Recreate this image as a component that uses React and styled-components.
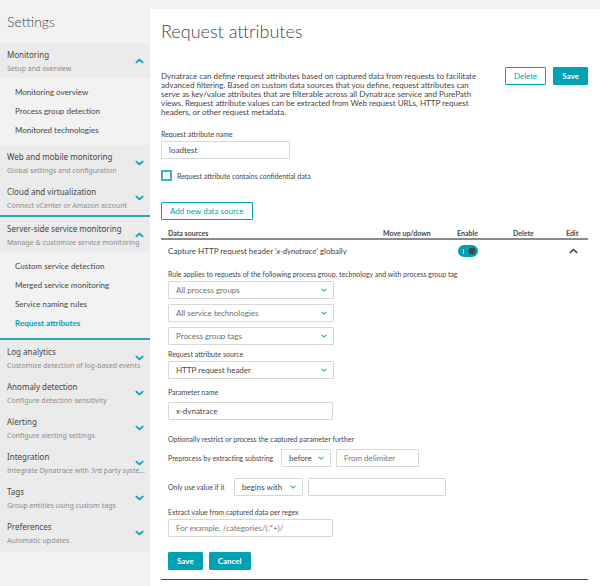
import React, { useState } from "react";
import styled, { createGlobalStyle } from "styled-components";

const GlobalStyle = createGlobalStyle`
  *, *::before, *::after {
    box-sizing: border-box;
  }

  body {
    margin: 0;
    background: #f2f2f2;
    color: #454646;
    font-family: "Lato", sans-serif;
    font-size: 8px;
    line-height: 10px;
  }

  button, input, select {
    margin: 0;
    font: inherit;
    color: inherit;
  }
`;

const Page = styled.div`
  display: flex;
  min-height: 100vh;
`;

const Sidebar = styled.nav`
  flex: 0 0 150px;
  min-width: 0;
  padding-top: 12px;
`;

const SidebarTitle = styled.h2`
  margin: 0 0 11px;
  padding-left: 7px;
  font-weight: 300;
  font-size: 14px;
  line-height: 20px;
`;

const Group = styled.section`
  border-style: solid;
  border-color: #27a9b8;
  border-width: ${(props) => (props.$active ? "2px 0" : "0")};

  &:last-child {
    padding-bottom: 2px;
    background: #ebebeb;
  }
`;

const GroupHeader = styled.button`
  display: grid;
  grid-template-columns: minmax(0, 1fr);
  width: 100%;
  height: 35px;
  padding: 0 6px 0 7px;
  border: 0;
  background: #ebebeb;
  text-align: left;
  align-items: center;
  cursor: pointer;

  > * {
    grid-area: 1 / 1;
  }

  > svg {
    justify-self: end;
  }
`;

const GroupText = styled.span`
  padding-top: 2px;
`;

const GroupTitle = styled.span`
  display: block;
  font-family: "Noto Sans", sans-serif;
  font-size: 8px;
  line-height: 14px;
  white-space: nowrap;
`;

const GroupHint = styled(GroupTitle)`
  font-size: 7px;
  line-height: 13px;
  color: #8c8c8c;
`;

const GroupLinks = styled.ul`
  margin: 0;
  padding: 5px 0 5px 15px;
  list-style: none;
`;

const GroupLink = styled.a`
  display: block;
  line-height: 19px;
  text-decoration: none;
  color: ${(props) => (props.$current ? "#00a1b2" : "#454646")};
  font-weight: ${(props) => (props.$current ? 700 : 400)};
`;

const Main = styled.main`
  flex: 1;
  min-width: 0;
  margin-top: 9px;
  padding: 10px 12px 6px 11px;
  background: #fff;
`;

const PageTitle = styled.h1`
  margin: 0 0 24px;
  font-weight: 300;
  font-size: 18px;
  line-height: 24px;
`;

const Intro = styled.div`
  display: flex;
  justify-content: space-between;
  align-items: flex-start;
  margin-bottom: 12px;
`;

const Description = styled.p`
  max-width: 325px;
  margin: 5px 0 0;
  line-height: 9px;
`;

const Actions = styled.div`
  display: flex;
  gap: ${(props) => props.$gap || 7}px;
`;

const Button = styled.button`
  height: 18px;
  padding: 0 8px;
  border: 1px solid #00a1b2;
  border-radius: 1px;
  background: ${(props) => (props.$primary ? "#00a1b2" : "#fff")};
  color: ${(props) => (props.$primary ? "#fff" : "#00a1b2")};
  font-weight: ${(props) => (props.$primary ? 700 : 400)};
  line-height: 16px;
  cursor: pointer;
`;

const Label = styled.label`
  display: block;
  font-size: 7px;
  line-height: 10px;
`;

const TextInput = styled.input`
  display: block;
  width: ${(props) => props.$width}px;
  height: 18px;
  padding: 0 7px;
  border: 1px solid #d8d8d8;
  border-radius: 1px;
  background: #fff;

  &::placeholder {
    color: #767676;
    opacity: 1;
  }
`;

const Confidential = styled.div`
  display: flex;
  align-items: center;
  gap: 5px;
  margin: 11px 0 21px;
`;

const Checkbox = styled.input`
  appearance: none;
  width: 11px;
  height: 11px;
  border: 2px solid #3fb3c4;
  background: #fff;

  &:checked {
    background: #00a1b2;
  }
`;

const Sources = styled.table`
  width: 100%;
  margin-top: 7px;
  border-collapse: collapse;
  table-layout: fixed;
  border-bottom: 1px solid #454646;

  th {
    height: 12px;
    padding: 0;
    border-bottom: 2px solid #8c8c8c;
    font-size: 7px;
    font-weight: 700;
    line-height: 10px;
    text-align: left;
    white-space: nowrap;
  }

  td {
    padding: 0;
  }

  th:first-child,
  td:first-child {
    padding-left: 7px;
  }
`;

const Col = styled.col`
  width: ${(props) => props.$width}px;
`;

const SourceRow = styled.tr`
  height: 22px;
`;

const Switch = styled.input`
  appearance: none;
  display: block;
  width: 20px;
  height: 12px;
  margin-left: 1px;
  border-radius: 6px;
  background:
    radial-gradient(circle at 14px 6px, #454646 3px, transparent 4px),
    linear-gradient(#8fd6dc, #8fd6dc) 5px 4px / 1px 5px no-repeat,
    #00a1b2;
  cursor: pointer;

  &:not(:checked) {
    background: radial-gradient(circle at 6px 6px, #454646 3px, transparent 4px), #b7b7b7;
  }
`;

const IconButton = styled.button`
  display: block;
  margin-left: 3px;
  padding: 0;
  border: 0;
  background: none;
  line-height: 0;
  cursor: pointer;
`;

const Form = styled.form`
  display: flex;
  flex-direction: column;
  padding: 8px 0 9px;
`;

const Field = styled.div`
  display: flex;
  flex-direction: column;
  gap: ${(props) => props.$gap || 2}px;
  margin-bottom: ${(props) => props.$after || 0}px;
`;

const SelectStack = styled.div`
  display: grid;
  gap: 5px;
`;

const InlineField = styled.div`
  display: flex;
  align-items: center;
  gap: 5px;
  margin-bottom: 11px;

  > ${Label} {
    width: ${(props) => props.$label}px;
    white-space: nowrap;
  }
`;

const SelectBox = styled.div`
  display: inline-grid;
  align-items: center;
  width: ${(props) => props.$width}px;

  > * {
    grid-area: 1 / 1;
  }

  > svg {
    justify-self: end;
    margin-right: 7px;
    pointer-events: none;
  }
`;

const SelectControl = styled.select`
  appearance: none;
  width: 100%;
  height: 18px;
  padding: 0 7px;
  border: 1px solid #d8d8d8;
  border-radius: 1px;
  background: #fff;
  color: ${(props) => (props.$muted ? "#6e6e6e" : "#454646")};
`;

function Chevron({ up, color = "#00a1b2", width = 9 }) {
  return (
    <svg width={width} height={(width * 2) / 3} viewBox="0 0 9 6" fill="none" aria-hidden="true">
      <path d={up ? "M.8 4.8 4.5 1.6 8.2 4.8" : "M.8 1.2 4.5 4.4 8.2 1.2"} stroke={color} strokeWidth="1.6" />
    </svg>
  );
}

function Select({ width = 166, muted, options, ...rest }) {
  return (
    <SelectBox $width={width}>
      <SelectControl $muted={muted} {...rest}>
        {options.map((option) => (
          <option key={option}>{option}</option>
        ))}
      </SelectControl>
      <Chevron width={6} color="#2ab6a0" />
    </SelectBox>
  );
}

const groups = [
  {
    title: "Monitoring",
    hint: "Setup and overview",
    links: ["Monitoring overview", "Process group detection", "Monitored technologies"],
  },
  { title: "Web and mobile monitoring", hint: "Global settings and configuration" },
  { title: "Cloud and virtualization", hint: "Connect vCenter or Amazon account" },
  {
    title: "Server-side service monitoring",
    hint: "Manage & customize service monitoring",
    links: [
      "Custom service detection",
      "Merged service monitoring",
      "Service naming rules",
      "Request attributes",
    ],
    current: "Request attributes",
  },
  { title: "Log analytics", hint: "Customize detection of log-based events" },
  { title: "Anomaly detection", hint: "Configure detection sensitivity" },
  { title: "Alerting", hint: "Configure alerting settings" },
  { title: "Integration", hint: "Integrate Dynatrace with 3rd party syste..." },
  { title: "Tags", hint: "Group entities using custom tags" },
  { title: "Preferences", hint: "Automatic updates" },
];

function SettingsGroup({ group }) {
  const [open, setOpen] = useState(Boolean(group.links));

  return (
    <Group $active={Boolean(group.current)}>
      <GroupHeader type="button" aria-expanded={open} onClick={() => setOpen(!open)}>
        <GroupText>
          <GroupTitle>{group.title}</GroupTitle>
          <GroupHint>{group.hint}</GroupHint>
        </GroupText>
        <Chevron up={open} />
      </GroupHeader>
      {open && group.links && (
        <GroupLinks>
          {group.links.map((link) => (
            <li key={link}>
              <GroupLink href="#" $current={link === group.current}>
                {link}
              </GroupLink>
            </li>
          ))}
        </GroupLinks>
      )}
    </Group>
  );
}

function SourceForm() {
  return (
    <Form onSubmit={(e) => e.preventDefault()}>
      <Field $after={4}>
        <Label htmlFor="group">
          Rule applies to requests of the following process group, technology and with process group tag
        </Label>
        <SelectStack>
          <Select id="group" muted options={["All process groups"]} />
          <Select aria-label="Service technology" muted options={["All service technologies"]} />
          <Select aria-label="Process group tags" muted options={["Process group tags"]} />
        </SelectStack>
      </Field>
      <Field $after={8}>
        <Label htmlFor="source">Request attribute source</Label>
        <Select id="source" options={["HTTP request header"]} />
      </Field>
      <Field $gap={5} $after={14}>
        <Label htmlFor="parameter">Parameter name</Label>
        <TextInput id="parameter" $width={165} defaultValue="x-dynatrace" />
      </Field>
      <Field $after={5}>
        <Label as="div">Optionally restrict or process the captured parameter further</Label>
      </Field>
      <InlineField $label={108}>
        <Label htmlFor="preprocess">Preprocess by extracting substring</Label>
        <Select id="preprocess" width={50} options={["before", "after"]} />
        <TextInput aria-label="Delimiter" $width={83} placeholder="From delimiter" />
      </InlineField>
      <InlineField $label={61}>
        <Label htmlFor="condition">Only use value if it</Label>
        <Select id="condition" width={69} options={["begins with", "ends with"]} />
        <TextInput aria-label="Condition value" $width={138} />
      </InlineField>
      <Field $after={15}>
        <Label htmlFor="regex">Extract value from captured data per regex</Label>
        <TextInput id="regex" $width={165} placeholder="For example, /categories/(.*+)/" />
      </Field>
      <Actions $gap={6}>
        <Button $primary type="submit">Save</Button>
        <Button $primary type="button">Cancel</Button>
      </Actions>
    </Form>
  );
}

function App() {
  const [editing, setEditing] = useState(true);

  return (
    <>
      <GlobalStyle />
      <Page>
        <Sidebar>
          <SidebarTitle>Settings</SidebarTitle>
          {groups.map((group) => (
            <SettingsGroup key={group.title} group={group} />
          ))}
        </Sidebar>
        <Main>
          <PageTitle>Request attributes</PageTitle>
          <Intro>
            <Description>
              Dynatrace can define request attributes based on captured data from requests to facilitate
              advanced filtering. Based on custom data sources that you define, request attributes can
              serve as key/value attributes that are filterable across all Dynatrace service and PurePath
              views. Request attribute values can be extracted from Web request URLs, HTTP request
              headers, or other request metadata.
            </Description>
            <Actions>
              <Button type="button">Delete</Button>
              <Button type="button" $primary>Save</Button>
            </Actions>
          </Intro>
          <Field>
            <Label htmlFor="name">Request attribute name</Label>
            <TextInput id="name" $width={129} defaultValue="loadtest" />
          </Field>
          <Confidential>
            <Checkbox type="checkbox" id="confidential" />
            <Label htmlFor="confidential">Request attribute contains confidential data</Label>
          </Confidential>
          <Button type="button">Add new data source</Button>
          <Sources>
            <colgroup>
              <col />
              <Col $width={74} />
              <Col $width={56} />
              <Col $width={53} />
              <Col $width={22} />
            </colgroup>
            <thead>
              <tr>
                <th>Data sources</th>
                <th>Move up/down</th>
                <th>Enable</th>
                <th>Delete</th>
                <th>Edit</th>
              </tr>
            </thead>
            <tbody>
              <SourceRow>
                <td>
                  Capture HTTP request header '<em>x-dynatrace</em>' globally
                </td>
                <td />
                <td>
                  <Switch type="checkbox" role="switch" aria-label="Enable" defaultChecked />
                </td>
                <td />
                <td>
                  <IconButton type="button" aria-label="Edit" onClick={() => setEditing(!editing)}>
                    <Chevron up={editing} color="#454646" />
                  </IconButton>
                </td>
              </SourceRow>
              {editing && (
                <tr>
                  <td colSpan={5}>
                    <SourceForm />
                  </td>
                </tr>
              )}
            </tbody>
          </Sources>
        </Main>
      </Page>
    </>
  );
}

export default App;
